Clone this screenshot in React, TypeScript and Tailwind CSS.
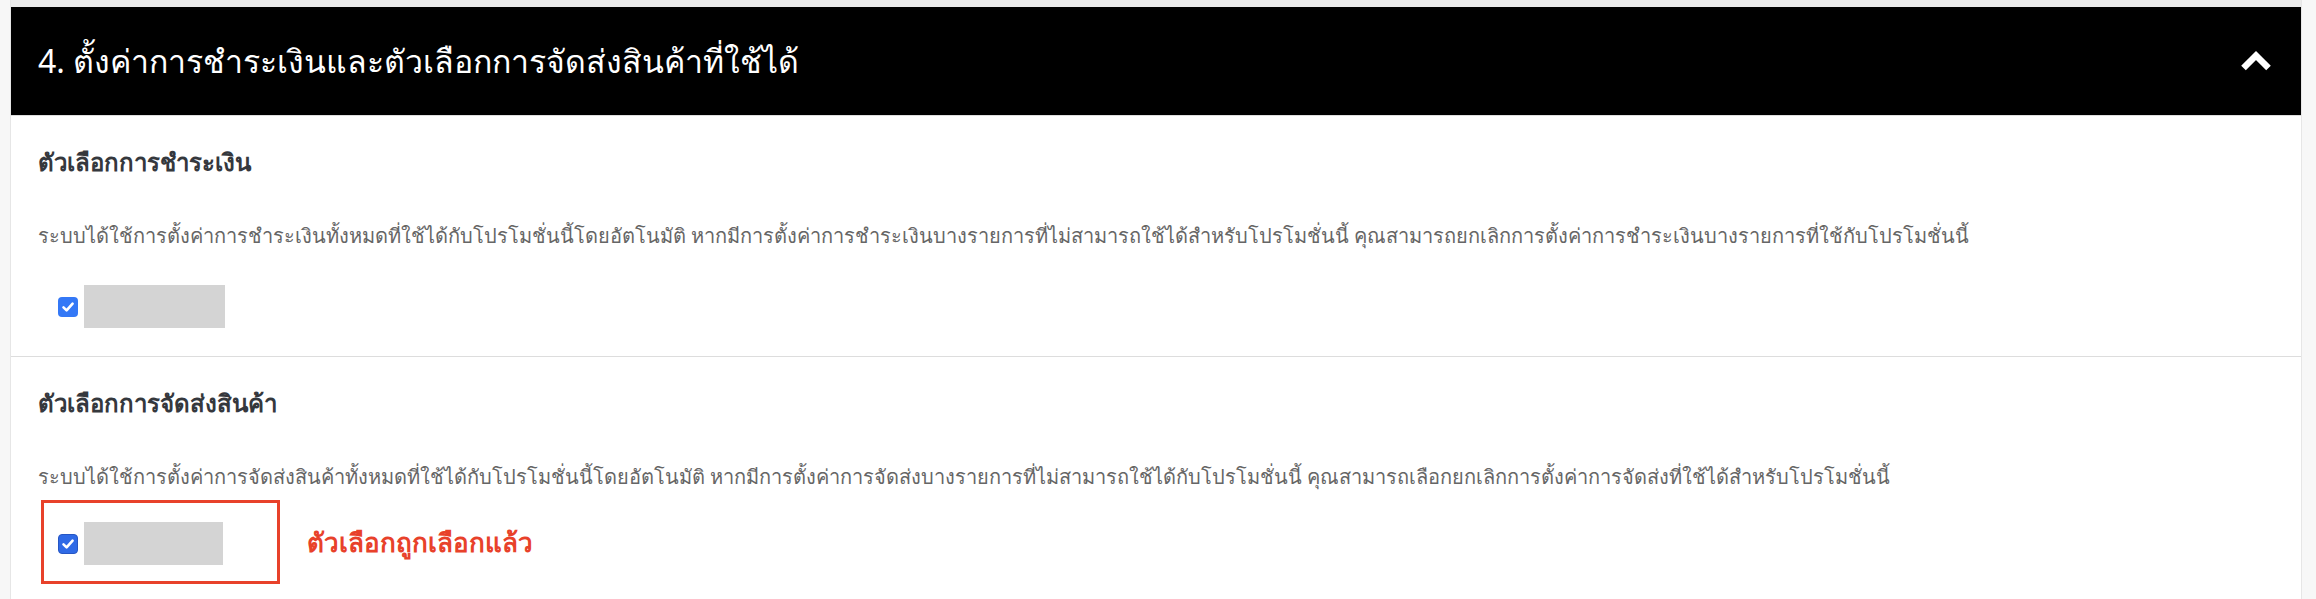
import type { ReactNode } from "react";

const font = { fontFamily: '"Noto Sans", "DejaVu Sans", "Liberation Sans", sans-serif' };

function Check({ dark }: { dark?: boolean }) {
  return (
    <span
      className={`flex h-[20px] w-[20px] items-center justify-center rounded-[4px] ${
        dark ? "border border-[#2656c4] bg-[#2f6ae6]" : "bg-[#3478f6]"
      }`}
    >
      <svg width="14" height="14" viewBox="0 0 14 14">
        <path d="M2.5 7.4 L5.6 10.4 L11.6 3.6" fill="none" stroke="#fff" strokeWidth="2.6" strokeLinecap="round" strokeLinejoin="round" />
      </svg>
    </span>
  );
}

function Section({ title, text, children }: { title: string; text: string; children: ReactNode }) {
  return (
    <div className="px-[27px] pt-[30px]">
      <h3 className="text-[24px] font-bold leading-[32px] text-[#35383d]">{title}</h3>
      <p className="mt-[43px] text-[20px] leading-[30px] text-[#666]">{text}</p>
      {children}
    </div>
  );
}

export default function App() {
  return (
    <div className="flex min-h-screen bg-[#f7f7f7]" style={font}>
      <div className="w-[11px] shrink-0 border-r border-[#e6e6e6]" />
      <div className="flex-1 bg-[#ebebeb] pt-[7px]">
        <div className="bg-white">
          <div className="flex h-[109px] items-center justify-between border-b border-[#dddddd] bg-black pl-[27px] pr-[29px]">
            <h2 className="text-[32px] leading-none text-white">4. ตั้งค่าการชำระเงินและตัวเลือกการจัดส่งสินค้าที่ใช้ได้</h2>
            <svg width="32" height="22" viewBox="0 0 32 22">
              <path d="M3.5 18 L16 5.5 L28.5 18" fill="none" stroke="#fff" strokeWidth="6.5" strokeLinejoin="miter" />
            </svg>
          </div>

          <div className="h-[241px] border-b border-[#dddddd]">
            <Section
              title="ตัวเลือกการชำระเงิน"
              text="ระบบได้ใช้การตั้งค่าการชำระเงินทั้งหมดที่ใช้ได้กับโปรโมชั่นนี้โดยอัตโนมัติ หากมีการตั้งค่าการชำระเงินบางรายการที่ไม่สามารถใช้ได้สำหรับโปรโมชั่นนี้ คุณสามารถยกเลิกการตั้งค่าการชำระเงินบางรายการที่ใช้กับโปรโมชั่นนี้"
            >
              <div className="mt-[34px] flex items-center gap-[6px] pl-[20px]">
                <Check />
                <div className="h-[43px] w-[141px] bg-[#d4d4d4]" />
              </div>
            </Section>
          </div>

          <div className="h-[260px]">
            <Section
              title="ตัวเลือกการจัดส่งสินค้า"
              text="ระบบได้ใช้การตั้งค่าการจัดส่งสินค้าทั้งหมดที่ใช้ได้กับโปรโมชั่นนี้โดยอัตโนมัติ หากมีการตั้งค่าการจัดส่งบางรายการที่ไม่สามารถใช้ได้กับโปรโมชั่นนี้ คุณสามารถเลือกยกเลิกการตั้งค่าการจัดส่งที่ใช้ได้สำหรับโปรโมชั่นนี้"
            >
              <div className="mt-[8px] flex items-center gap-[27px]">
                <div className="ml-[3px] flex items-center gap-[6px] border-[3px] border-[#e8412a] pb-[16px] pl-[14px] pr-[54px] pt-[19px]">
                  <Check dark />
                  <div className="h-[43px] w-[139px] bg-[#d4d4d4]" />
                </div>
                <span className="text-[26px] font-bold text-[#e8412a]">ตัวเลือกถูกเลือกแล้ว</span>
              </div>
            </Section>
          </div>
        </div>
      </div>
      <div className="w-[15px] shrink-0 border-l border-[#e6e6e6]" />
    </div>
  );
}
